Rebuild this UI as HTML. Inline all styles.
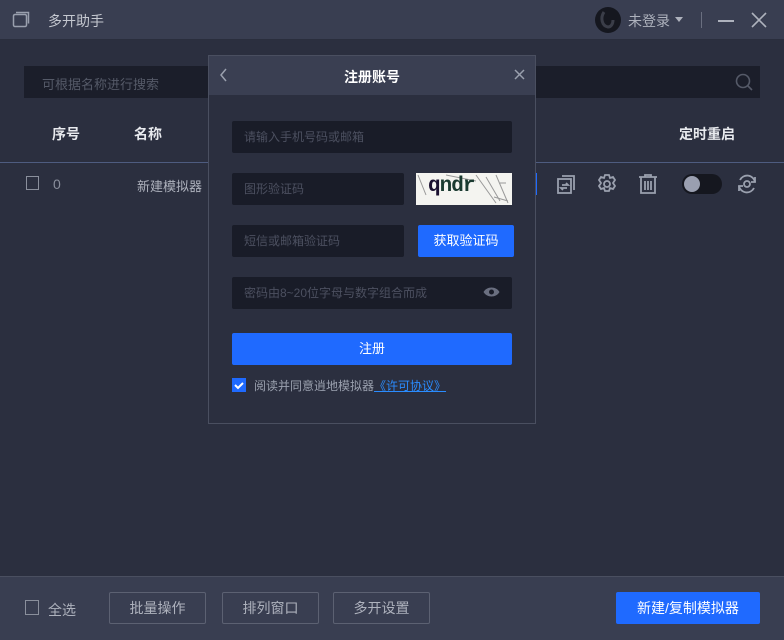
<!DOCTYPE html><html><head><meta charset="utf-8"><style>
*{margin:0;padding:0;box-sizing:border-box}
body{width:784px;height:640px;background:#2b2f3f;font-family:"Liberation Sans","Noto Sans CJK SC",sans-serif;position:relative;overflow:hidden;color:#c8cbd4;font-size:13px}
.a{position:absolute}
.btn{position:absolute;top:592px;height:32px;border:1px solid #5c6172;border-radius:2px;color:#aeb2bd;font-size:14px;text-align:center;line-height:30px}
.inp{position:absolute;background:#191c28;border-radius:2px;color:#4c5060;font-size:12px;line-height:32px;padding-left:12px;height:32px}
</style></head><body>
<div class="a" style="left:0;top:0;width:784px;height:40px;background:#393e51;border-bottom:1px solid #2a2e3d"></div>
<svg class="a" style="left:12px;top:10px" width="20" height="20" viewBox="0 0 20 20" fill="none" stroke="#9aa0ae" stroke-width="1.5"><rect x="1.5" y="4.5" width="13" height="12" rx="1.5"/><path d="M4 2.5h12.5v11"/></svg>
<div class="a" style="left:48px;top:11px;font-size:14px;color:#c5c8d0">多开助手</div>
<svg class="a" style="left:594px;top:6px" width="28" height="28" viewBox="0 0 28 28"><circle cx="14" cy="14" r="13" fill="#15171f"/><path d="M10 6c-4 6-2 14 4 15 3 0 5-3 5-7" stroke="#3a3d48" stroke-width="3" fill="none"/></svg>
<div class="a" style="left:628px;top:11px;font-size:14px;color:#aeb2bd">未登录</div>
<svg class="a" style="left:675px;top:17px" width="8" height="5"><path d="M0 0h8L4 5z" fill="#aeb2bd"/></svg>
<div class="a" style="left:701px;top:12px;width:1px;height:16px;background:#6a6f80"></div>
<div class="a" style="left:718px;top:20px;width:16px;height:2px;background:#aeb2bd"></div>
<svg class="a" style="left:751px;top:12px" width="16" height="16"><path d="M1 1L15 15M15 1L1 15" stroke="#aeb2bd" stroke-width="1.6"/></svg>
<div class="a" style="left:24px;top:66px;width:736px;height:32px;background:#1b1e2a"></div>
<div class="a" style="left:42px;top:74px;font-size:13px;color:#555a68">可根据名称进行搜索</div>
<svg class="a" style="left:735px;top:73px" width="18" height="18" fill="none" stroke="#555a68" stroke-width="1.6"><circle cx="8" cy="8" r="6.5"/><path d="M13 13l4 4"/></svg>
<div class="a" style="left:52px;top:124px;font-size:14px;font-weight:bold;color:#e8eaee">序号</div>
<div class="a" style="left:134px;top:124px;font-size:14px;font-weight:bold;color:#e8eaee">名称</div>
<div class="a" style="left:679px;top:124px;font-size:14px;font-weight:bold;color:#e8eaee">定时重启</div>
<div class="a" style="left:0;top:162px;width:784px;height:1px;background:#4e5c80"></div>
<div class="a" style="left:26px;top:176px;width:13px;height:14px;border:1px solid #8a8f9c"></div>
<div class="a" style="left:53px;top:176px;font-size:14px;color:#8a8f9c">0</div>
<div class="a" style="left:137px;top:176px;font-size:13px;color:#aeb2bd">新建模拟器</div>
<div class="a" style="left:534px;top:173px;width:3px;height:22px;background:#1f6aff"></div>
<svg class="a" style="left:556px;top:173px" width="22" height="22" fill="none" stroke="#9aa0ae" stroke-width="1.8"><path d="M6 3h12v14"/><rect x="2" y="6" width="13" height="14"/><path d="M6 12h6l-2-2M11 15H5l2 2"/></svg>
<svg class="a" style="left:596px;top:173px" width="22" height="22" fill="none" stroke="#9aa0ae" stroke-width="1.8"><circle cx="11" cy="11" r="3"/><path d="M9 2h4l1 3 3-1 2 3-2 3 2 3-2 3-3-1-1 3H9l-1-3-3 1-2-3 2-3-2-3 2-3 3 1z"/></svg>
<svg class="a" style="left:637px;top:173px" width="22" height="22" fill="none" stroke="#9aa0ae" stroke-width="1.8"><path d="M2 4h18M8 4V2h6v2M4 4v16h14V4M8 8v9M11 8v9M14 8v9"/></svg>
<div class="a" style="left:682px;top:174px;width:40px;height:20px;background:#15171f;border-radius:10px"></div>
<div class="a" style="left:684px;top:176px;width:16px;height:16px;background:#9a9fb0;border-radius:50%"></div>
<svg class="a" style="left:736px;top:173px" width="22" height="22" fill="none" stroke="#9aa0ae" stroke-width="1.8"><path d="M4 7a8 8 0 0 1 15 2M18 15a8 8 0 0 1-15-2"/><circle cx="11" cy="11" r="3"/><path d="M19 4v5h-4M3 18v-5h4"/></svg>
<div class="a" style="left:0;top:576px;width:784px;height:64px;background:#393e51;border-top:1px solid #4a4f60"></div>
<div class="a" style="left:25px;top:600px;width:14px;height:15px;border:1px solid #8a8f9c"></div>
<div class="a" style="left:48px;top:600px;font-size:14px;color:#aeb2bd">全选</div>
<div class="btn" style="left:109px;width:97px">批量操作</div>
<div class="btn" style="left:222px;width:97px">排列窗口</div>
<div class="btn" style="left:333px;width:97px">多开设置</div>
<div class="a" style="left:616px;top:592px;width:144px;height:32px;background:#1f6aff;border-radius:2px;color:#fff;font-size:14px;text-align:center;line-height:32px">新建/复制模拟器</div>
<div class="a" style="left:208px;top:55px;width:328px;height:369px;background:#2b2f3f;border:1px solid #4a4f60"></div>
<div class="a" style="left:209px;top:56px;width:326px;height:39px;background:#3a3f52"></div>
<svg class="a" style="left:219px;top:68px" width="8" height="14" fill="none" stroke="#9aa0ae" stroke-width="1.5"><path d="M7 1L2 7l5 6"/></svg>
<div class="a" style="left:208px;top:67px;width:328px;text-align:center;font-size:14px;font-weight:bold;color:#fff">注册账号</div>
<svg class="a" style="left:514px;top:69px" width="11" height="11"><path d="M1 1l9 9M10 1l-9 9" stroke="#9aa0ae" stroke-width="1.5"/></svg>
<div class="inp" style="left:232px;top:121px;width:280px">请输入手机号码或邮箱</div>
<div class="inp" style="left:232px;top:173px;width:172px">图形验证码</div>
<div class="a" style="left:416px;top:173px;width:96px;height:32px;background:#f4f4f0;overflow:hidden">
<svg class="a" style="left:0;top:0" width="96" height="32" fill="none" stroke="#999" stroke-width="1"><path d="M2 2l8 20M60 2l20 28M70 4l14 24M80 2l12 28M30 2l30 6M84 10h6M78 24l14 4"/></svg>
<div class="a" style="left:12px;top:2px;font:bold 21px 'Liberation Mono',monospace;color:#1a3a30;letter-spacing:-1px"><span style="color:#1a1030">q</span>ndr</div></div>
<div class="inp" style="left:232px;top:225px;width:172px">短信或邮箱验证码</div>
<div class="a" style="left:418px;top:225px;width:96px;height:32px;background:#1f6aff;border-radius:2px;color:#fff;font-size:13px;text-align:center;line-height:32px">获取验证码</div>
<div class="inp" style="left:232px;top:277px;width:280px">密码由8~20位字母与数字组合而成</div>
<svg class="a" style="left:483px;top:286px" width="17" height="12"><path d="M0.5 6C4 0 13 0 16.5 6 13 12 4 12 0.5 6z" fill="#6a6f80"/><circle cx="8.5" cy="6" r="2.5" fill="#191c28"/></svg>
<div class="a" style="left:232px;top:333px;width:280px;height:32px;background:#1f6aff;border-radius:2px;color:#fff;font-size:13px;text-align:center;line-height:32px">注册</div>
<div class="a" style="left:232px;top:378px;width:14px;height:14px;background:#1f6aff"></div>
<svg class="a" style="left:232px;top:378px" width="14" height="14" fill="none" stroke="#fff" stroke-width="2"><path d="M3 7l3 3 5-5"/></svg>
<div class="a" style="left:254px;top:377px;font-size:12px;color:#9aa0ae">阅读并同意逍地模拟器<span style="color:#2a8cff;text-decoration:underline">《许可协议》</span></div>
</body></html>
